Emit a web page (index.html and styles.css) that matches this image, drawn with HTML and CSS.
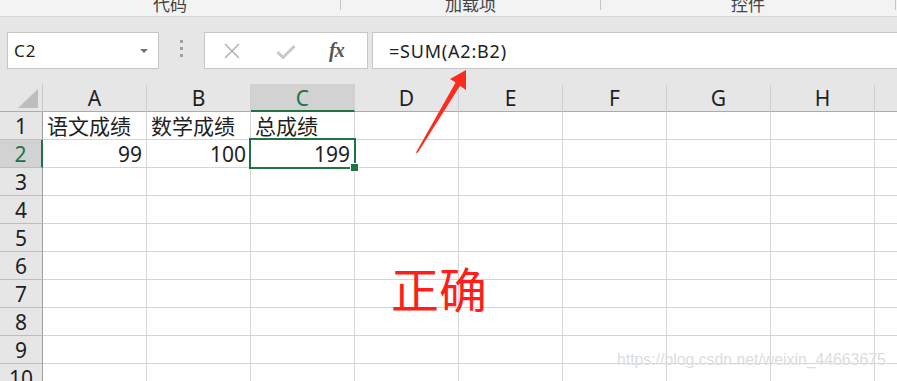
FILE: index.html
```html
<!DOCTYPE html>
<html lang="zh-CN">
  <head>
    <meta charset="UTF-8" />
    <title>SUM 正确</title>
    <link rel="stylesheet" href="styles.css">
  </head>
  <body>
    <!-- Ruban (bas des groupes) -->
    <div class="ribbon">
      <div class="group g-code"><span>代码</span></div>
      <div class="group g-addin"><span>加载项</span></div>
      <div class="group g-ctrl"><span>控件</span></div>
    </div>
    <!-- Barre de formule -->
    <div class="formula-bar">
      <div class="name-box">
        <span>C2</span>
        <i class="caret"></i>
      </div>
      <div class="grip"><b></b><b></b><b></b></div>
      <div class="fx-box">
        <svg class="ico-x" width="18" height="16" viewBox="0 0 18 16">
          <path d="M2 1 L16 15 M16 1 L2 15" stroke="#b4b4b4" stroke-width="1.6" fill="none" />
        </svg>
        <svg class="ico-ok" width="20" height="16" viewBox="0 0 20 16">
          <path d="M1.5 8 L7 13.5 L18.5 2" stroke="#c8c8c8" stroke-width="3" fill="none" />
        </svg>
        <span class="fx">fx</span>
      </div>
      <div class="formula">=SUM(A2:B2)</div>
    </div>
    <!-- Feuille -->
    <div class="sheet">
      <div class="corner"><i></i></div>
      <div class="col-head">A</div>
      <div class="col-head">B</div>
      <div class="col-head active">C</div>
      <div class="col-head">D</div>
      <div class="col-head">E</div>
      <div class="col-head">F</div>
      <div class="col-head">G</div>
      <div class="col-head">H</div>
      <div class="col-head"></div>

      <div class="row-head">1</div>
      <div class="cell">语文成绩</div>
      <div class="cell">数学成绩</div>
      <div class="cell">总成绩</div>
      <div class="cell"></div><div class="cell"></div><div class="cell"></div>
      <div class="cell"></div><div class="cell"></div><div class="cell"></div>

      <div class="row-head active">2</div>
      <div class="cell num">99</div>
      <div class="cell num">100</div>
      <div class="cell num selected">199</div>
      <div class="cell"></div><div class="cell"></div><div class="cell"></div>
      <div class="cell"></div><div class="cell"></div><div class="cell"></div>

      <div class="row-head">3</div>
      <div class="cell"></div><div class="cell"></div><div class="cell"></div>
      <div class="cell"></div><div class="cell"></div><div class="cell"></div>
      <div class="cell"></div><div class="cell"></div><div class="cell"></div>

      <div class="row-head">4</div>
      <div class="cell"></div><div class="cell"></div><div class="cell"></div>
      <div class="cell"></div><div class="cell"></div><div class="cell"></div>
      <div class="cell"></div><div class="cell"></div><div class="cell"></div>

      <div class="row-head">5</div>
      <div class="cell"></div><div class="cell"></div><div class="cell"></div>
      <div class="cell"></div><div class="cell"></div><div class="cell"></div>
      <div class="cell"></div><div class="cell"></div><div class="cell"></div>

      <div class="row-head">6</div>
      <div class="cell"></div><div class="cell"></div><div class="cell"></div>
      <div class="cell"></div><div class="cell"></div><div class="cell"></div>
      <div class="cell"></div><div class="cell"></div><div class="cell"></div>

      <div class="row-head">7</div>
      <div class="cell"></div><div class="cell"></div><div class="cell"></div>
      <div class="cell"></div><div class="cell"></div><div class="cell"></div>
      <div class="cell"></div><div class="cell"></div><div class="cell"></div>

      <div class="row-head">8</div>
      <div class="cell"></div><div class="cell"></div><div class="cell"></div>
      <div class="cell"></div><div class="cell"></div><div class="cell"></div>
      <div class="cell"></div><div class="cell"></div><div class="cell"></div>

      <div class="row-head">9</div>
      <div class="cell"></div><div class="cell"></div><div class="cell"></div>
      <div class="cell"></div><div class="cell"></div><div class="cell"></div>
      <div class="cell"></div><div class="cell"></div><div class="cell"></div>

      <div class="row-head">10</div>
      <div class="cell"></div><div class="cell"></div><div class="cell"></div>
      <div class="cell"></div><div class="cell"></div><div class="cell"></div>
      <div class="cell"></div><div class="cell"></div><div class="cell"></div>
    </div>

    <!-- Annotations par-dessus -->
    <svg class="arrow" width="897" height="381" viewBox="0 0 897 381">
      <polygon points="466,70 450,79 455.6,82.6 416,152.5 417.6,153 460,85.8 466,90" fill="#ff2a1f" />
    </svg>
    <div class="note">正确</div>
    <div class="watermark">https://blog.csdn.net/weixin_44663675</div>
  </body>
</html>
```

FILE: styles.css
```css
/* =============================================
   Base
   ============================================= */
* {
  margin: 0;
  padding: 0;
  box-sizing: border-box;
}
:root {
  --xl-green: #217346;
  --grid-line: #d4d4d4;
  --tool-bg: #e6e6e6;
}
html,
body {
  overflow: hidden;
}
body {
  width: 897px;
  height: 381px;
  position: relative;
  background: #ffffff;
  color: #1f1f1f;
  font-family: "Noto Sans", "Noto Sans CJK SC", sans-serif;
}
/* =============================================
   Ruban
   ============================================= */
.ribbon {
  height: 17px;
  display: flex;
  align-items: flex-start;
  overflow: hidden;
  background: #f3f3f3;
  border-bottom: 1px solid #d5d5d5;
}
.group {
  height: 10px;
  display: flex;
  justify-content: center;
  border-right: 1px solid #c6c6c6;
}
.group span {
  margin-top: -5px;
  font-family: "Noto Sans CJK SC", sans-serif;
  font-size: 17px;
  line-height: 17px;
  color: #444444;
}
.g-code {
  width: 341px;
}
.g-addin {
  width: 260px;
}
.g-ctrl {
  width: 295px;
}
/* =============================================
   Barre de formule
   ============================================= */
.formula-bar {
  height: 67px;
  display: flex;
  align-items: flex-start;
  padding: 15px 0 0 7px;
  background: var(--tool-bg);
}
.name-box,
.fx-box,
.formula {
  height: 37px;
  background: #ffffff;
  border: 1px solid #c6c6c6;
  display: flex;
  align-items: center;
}
.name-box {
  width: 152px;
  justify-content: space-between;
  padding: 0 10px 0 6px;
  font-size: 17px;
  letter-spacing: 1px;
  color: #222222;
}
.caret {
  width: 0;
  height: 0;
  border-left: 4px solid transparent;
  border-right: 4px solid transparent;
  border-top: 4px solid #707070;
}
.grip {
  width: 45px;
  display: flex;
  flex-direction: column;
  align-items: center;
  gap: 4px;
  padding-top: 8px;
}
.grip b {
  width: 3px;
  height: 3px;
  background: #a0a0a0;
}
.fx-box {
  width: 164px;
  padding-left: 18px;
}
.ico-x {
  margin-top: 1px;
}
.ico-ok {
  margin-left: 35px;
  margin-top: 2px;
}
.fx {
  margin-left: 33px;
  font-family: "Liberation Serif", serif;
  font-style: italic;
  font-weight: bold;
  font-size: 20px;
  color: #555555;
  letter-spacing: -1px;
}
.formula {
  flex: 1;
  margin-left: 4px;
  border-right: none;
  padding-left: 16px;
  font-size: 18px;
  letter-spacing: 0.8px;
  color: #222222;
}
/* =============================================
   Feuille de calcul
   ============================================= */
.sheet {
  display: grid;
  grid-template-columns: 43px repeat(9, 104px);
  grid-auto-rows: 28px;
  overflow: hidden;
}
.corner,
.col-head,
.row-head {
  background: var(--tool-bg);
}
.corner {
  position: relative;
  border-right: 1px solid #c8c8c8;
  border-bottom: 1px solid #ababab;
}
.corner i {
  position: absolute;
  right: 4px;
  bottom: 3px;
  width: 0;
  height: 0;
  border-left: 20px solid transparent;
  border-bottom: 19px solid #bdbdbd;
}
.col-head {
  display: flex;
  justify-content: center;
  align-items: center;
  font-size: 21px;
  line-height: 1;
  padding-top: 2px;
  border-right: 1px solid #cfcfcf;
  border-bottom: 1px solid #ababab;
}
.col-head.active {
  background: #d2d2d2;
  color: var(--xl-green);
  border-bottom: 2px solid var(--xl-green);
}
.row-head {
  display: flex;
  justify-content: center;
  align-items: center;
  font-size: 21px;
  line-height: 1;
  padding-top: 1px;
  border-right: 1px solid #9e9e9e;
  border-bottom: 1px solid #bdbdbd;
}
.row-head.active {
  background: #d2d2d2;
  color: var(--xl-green);
  border-right: 2px solid var(--xl-green);
}
.cell {
  display: flex;
  align-items: flex-end;
  padding: 0 4px 0 4px;
  font-family: "Noto Sans", "Noto Sans CJK SC", sans-serif;
  font-size: 21px;
  line-height: 26px;
  white-space: nowrap;
  border-right: 1px solid var(--grid-line);
  border-bottom: 1px solid var(--grid-line);
}
.cell.num {
  justify-content: flex-end;
}
/* Cellule active C2 */
.cell.selected {
  position: relative;
}
.cell.selected::after {
  content: "";
  position: absolute;
  top: -2px;
  left: -2px;
  right: -2px;
  bottom: -2px;
  border: 2px solid var(--xl-green);
}
.cell.selected::before {
  content: "";
  position: absolute;
  right: -5px;
  bottom: -5px;
  width: 7px;
  height: 7px;
  background: var(--xl-green);
  border: 1px solid #ffffff;
  z-index: 2;
}
/* =============================================
   Annotations
   ============================================= */
.arrow {
  position: absolute;
  top: 0;
  left: 0;
}
.note {
  position: absolute;
  left: 391px;
  top: 263px;
  font-family: "Noto Sans CJK SC", sans-serif;
  font-size: 48px;
  line-height: 1;
  color: #ff1f1a;
}
.watermark {
  position: absolute;
  left: 617px;
  top: 351px;
  font-family: "Liberation Sans", sans-serif;
  font-size: 15.8px;
  color: rgba(190, 190, 190, 0.55);
  text-shadow: 0 0 1px #ffffff;
  white-space: nowrap;
}
```
